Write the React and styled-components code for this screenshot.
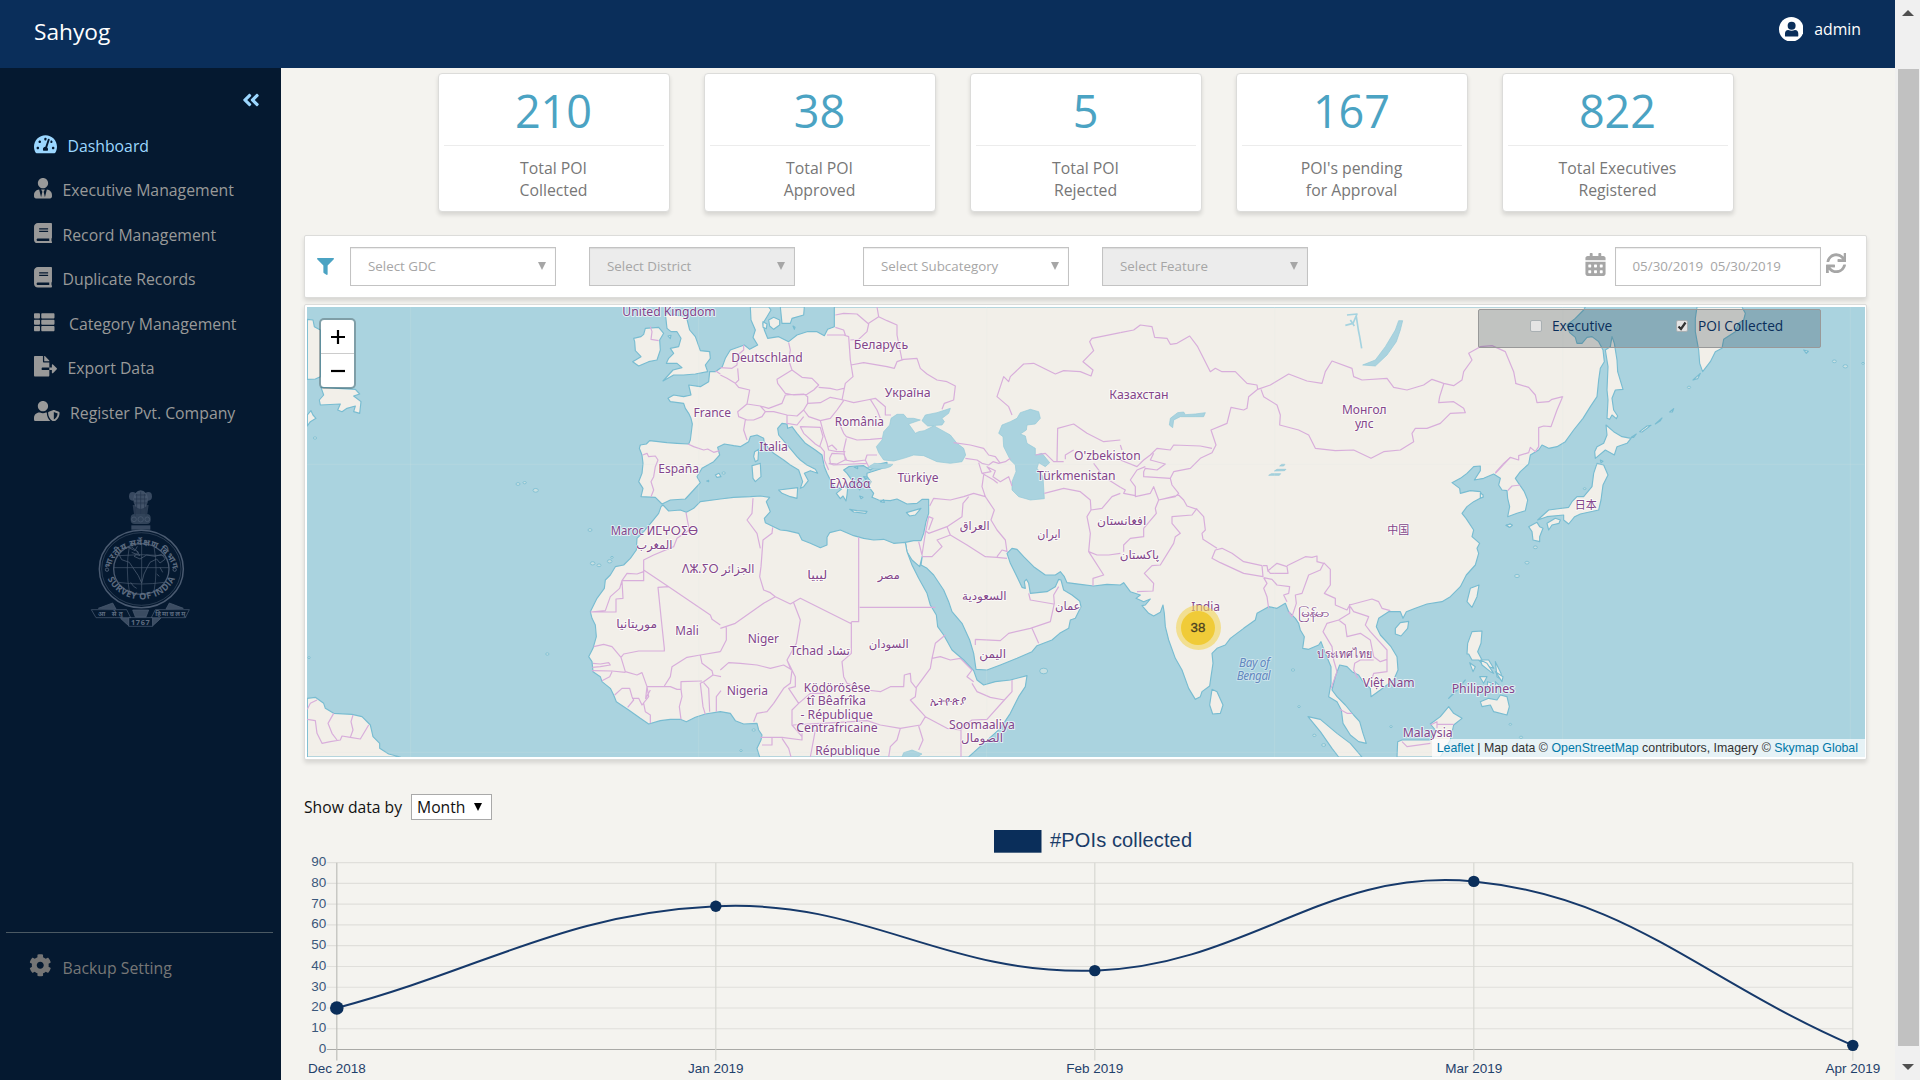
import React from "react";
import styled, { createGlobalStyle } from "styled-components";
import {
  FaTachometerAlt, FaUserTie, FaBook, FaThList, FaFileExport, FaUserShield,
  FaCog, FaAngleDoubleLeft, FaFilter, FaCalendarAlt, FaSync,
} from "react-icons/fa";

const sans = `"Open Sans", "Noto Sans", sans-serif`;
const arial = `"Liberation Sans", Arial, sans-serif`;

const GlobalStyle = createGlobalStyle`
  * { box-sizing: border-box; }
  body { margin: 0; background: #f4f3ef; font-family: ${sans}; overflow: hidden; }
`;

/* ---------- shell ---------- */
const Shell = styled.div`display: flex; width: 1920px; height: 1080px; overflow: hidden;`;
const Page = styled.div`display: flex; flex-direction: column; width: 1895px; flex: none;`;
const Header = styled.header`
  display: flex; justify-content: space-between; height: 68px; flex: none;
  padding: 0 34px 0 34px; background: #0a2e5a; color: #fff;
`;
const Brand = styled.div`font-size: 22.7px; line-height: 64px;`;
const Account = styled.div`
  display: flex; align-items: center; gap: 11px; height: 58px; font-size: 15.8px;
`;
const Body = styled.div`display: flex; height: 1012px;`;

const ScrollTrack = styled.div`
  display: flex; flex-direction: column; align-items: center;
  width: 25px; background: #f0f0f0; padding-top: 10px;
`;
const ScrollThumb = styled.div`width: 21px; height: 977px; margin: 53px 0 18px 1px; background: #c1c1c1;`;
const ScrollArrow = styled.div`
  width: 0; height: 0; border: 6px solid transparent;
  border-top-width: ${p => (p.$up ? 0 : 6)}px; border-bottom-width: ${p => (p.$up ? 6 : 0)}px;
  border-top-color: ${p => (p.$up ? "transparent" : "#505050")};
  border-bottom-color: ${p => (p.$up ? "#505050" : "transparent")};
`;

/* ---------- sidebar ---------- */
const Sidebar = styled.aside`
  display: flex; flex-direction: column; width: 281px; flex: none; background: #051930;
`;
const Collapse = styled.div`
  display: flex; justify-content: flex-end; padding: 22px 20px 0 0; height: 55.5px; color: #9cd7ff;
`;
const NavRow = styled.div`
  display: flex; align-items: center; height: 44.5px; padding-left: 34px; gap: ${p => p.$gap}px;
  font-size: 15.8px; color: ${p => (p.$active ? "#9cd7ff" : "#999")};
  svg { margin-bottom: 4px; flex: none; }
`;
const EmblemBox = styled.div`margin: 54px 0 0 90px; height: 140px;`;
const Divider = styled.div`height: 1px; margin: auto 8px 0 6px; background: #4b5963;`;
const BackupRow = styled.div`
  display: flex; align-items: center; gap: 11px; height: 147px; padding: 0 0 78px 29px;
  font-size: 15.8px; color: #777;
  svg { margin-bottom: 4px; color: #757575; }
`;

/* ---------- main ---------- */
const Main = styled.main`
  display: flex; flex-direction: column; flex: 1; min-width: 0; padding: 5px 28px 0 23px; background: #f4f3ef;
`;
const Cards = styled.div`display: flex; justify-content: center; gap: 34px;`;
const Card = styled.div`
  width: 232px; height: 139px; padding: 0 5px; background: #fff; text-align: center;
  border: 1px solid #dcdcda; border-radius: 4px; box-shadow: 0 3px 4px rgba(0,0,0,.12);
`;
const CardValue = styled.div`
  height: 72px; border-bottom: 1px solid #ececec; color: #4ba3c3;
  font-size: 45px; line-height: 73px;
`;
const CardLabel = styled.div`
  padding-top: 11px; font-size: 15.8px; line-height: 22px; color: #777; white-space: pre-line;
`;
const Panel = styled.div`
  background: #fff; border: 1px solid #dcdcda; border-radius: 2px; box-shadow: 0 3px 4px rgba(0,0,0,.12);
`;
const Filters = styled(Panel)`
  display: flex; align-items: center; height: 63px; margin-top: 23px; padding: 0 20px 0 12px;
`;
const FilterIcon = styled.span`
  display: flex; color: ${p => p.$color}; margin: 0 ${p => p.$right}px ${p => p.$bottom || 0}px ${p => p.$left || 0}px;
`;
const Field = styled.div`
  display: flex; align-items: center; justify-content: space-between; width: 206px; height: 39px;
  margin-right: ${p => p.$after || 0}px; padding: 0 9px 2px 17px;
  background: ${p => (p.$disabled ? "#ececec" : "#fff")}; border: 1px solid #c3c3c3;
  box-shadow: inset 0 1px 1px rgba(0,0,0,.08);
  color: #a6a6a6; font-size: 13.33px; white-space: pre;
`;
const Caret = styled.span`
  width: 0; height: 0; border: solid transparent; border-width: ${p => p.$h}px 4px 0;
  border-top-color: ${p => p.$color};
`;
const Spacer = styled.div`flex: 1;`;

const MapPanel = styled(Panel)`margin-top: 6px; height: 456px; padding: 2px 1px 2px 2px; `;
const MapView = styled.div`position: relative; width: 1558px; height: 450px; overflow: hidden;`;
const ZoomControl = styled.div`
  position: absolute; left: 12px; top: 11px; width: 37px; height: 71px; background: #fff; background-clip: padding-box;
  border: 2px solid rgba(0,0,0,.25); border-radius: 5px;
`;
const ZoomButton = styled.div`
  display: flex; align-items: center; justify-content: center; height: ${p => p.$h}px;
  border-bottom: ${p => (p.$line ? "1px solid #ccc" : "none")};
`;
const LayerBox = styled.div`
  position: absolute; left: 1171px; top: 2px; width: 343px; height: 39px; display: flex; align-items: center;
  padding: 0 0 6px 51px; background: rgba(0,20,35,.2); border: 1px solid #999; border-radius: 2px;
  color: #0a2e5a; font-size: 13.7px;
`;
const Check = styled.span`
  display: flex; width: 12px; height: 12px; margin: 0 10px 0 0; background: #e4e4e4;
  border: 1px solid #a9b0b3; border-radius: 2px;
`;
const LayerName = styled.span`width: ${p => p.$w}px; white-space: nowrap;`;
const Attribution = styled.div`
  position: absolute; right: 0; bottom: 0; height: 18px; padding: 0 7px 0 5px; white-space: nowrap;
  background: rgba(255,255,255,.7); font: 12.36px/18px ${arial}; color: #333;
  span { color: #0078a8; }
`;
const Cluster = styled.div`
  position: absolute; left: 868.5px; top: 298px; width: 45px; height: 45px; padding: 5.5px; border-radius: 50%;
  background: rgba(241,211,87,.6);
`;
const ClusterCore = styled.div`
  height: 34px; border-radius: 50%; background: rgba(240,200,40,.85); color: #4a4020;
  text-align: center; font: 13.3px/33px ${arial}; -webkit-text-stroke: .3px #4a4020;
`;

const Controls = styled.div`
  display: flex; align-items: center; height: 26px; margin-top: 34px; gap: 9px; font-size: 15.7px; color: #111;
`;
const MonthSelect = styled.div`
  display: flex; align-items: center; justify-content: space-between; width: 81px; height: 26px;
  padding: 0 9px 0 5px; background: #fff; border: 1px solid #a9a9a9;
`;
const ChartArea = styled.svg`
  display: block; flex: none; width: 1591px; height: 260px; margin-right: -28px; font-family: ${arial};
`;

/* ---------- icons ---------- */
const UserBadge = () => (
  <svg width="24.6" height="24.6" viewBox="0 0 74 74">
    <circle cx="37" cy="37" r="37" fill="#fff" />
    <ellipse cx="38" cy="26" rx="12" ry="12" fill="#0a2e5a" />
    <path d="M18 57V50Q18 40 28 39Q38 44 48 39Q58 40 58 50V57Q58 59 55 59H21Q18 59 18 57Z" fill="#0a2e5a" />
  </svg>
);

const Emblem = () => (
  <svg width="102" height="140" viewBox="90 90 306 420" fill="none" stroke="#4a5a70" strokeWidth="2.2">
    <g fill="#4a5a70" stroke="none">
      <ellipse cx="242" cy="122" rx="22" ry="28" opacity=".85" />
      <ellipse cx="218" cy="112" rx="11" ry="13" opacity=".75" />
      <ellipse cx="265" cy="112" rx="11" ry="13" opacity=".75" />
      <path d="M218 138H266L262 165H222Z" opacity=".55" />
      <rect x="212" y="165" width="60" height="30" rx="12" opacity=".65" />
      <rect x="214" y="199" width="57" height="13" opacity=".75" />
    </g>
    <path d="M230 105V150M242 98V165M254 105V150M226 145V170M258 145V170M222 120H262M226 108H258M222 132H262" stroke="#26374e" />
    <circle cx="222" cy="181" r="7" /><circle cx="242" cy="181" r="8" /><circle cx="262" cy="181" r="7" />
    <ellipse cx="244" cy="330" rx="126" ry="116" strokeWidth="4.5" />
    <ellipse cx="244" cy="330" rx="119" ry="109" strokeWidth="1.6" />
    <ellipse cx="244" cy="330" rx="83" ry="76" strokeWidth="4" />
    <path d="M245 253V407M160 326H328M175 290Q244 284 313 290M175 370Q244 380 313 370M208 262Q196 330 208 398M282 262Q294 330 282 398" strokeWidth="2" />
    <path d="M175 282L190 268 215 264 235 280 222 292 240 300 260 288 285 292 305 286 316 300 300 312 290 300 270 310 262 325 252 345 245 372 235 350 218 325 208 310 185 302ZM205 265L225 275 232 262M215 280L240 290 230 275M300 325L308 340M212 370Q220 385 230 388M290 345L298 352" strokeWidth="2.4" />
    <circle cx="141" cy="332" r="5" strokeWidth="3" /><circle cx="344" cy="332" r="5" strokeWidth="3" />
    <path id="arcTop" d="M150 332A95 86 0 0 1 338 332" stroke="none" />
    <path id="arcBottom" d="M137 342A110 103 0 0 0 351 342" stroke="none" />
    <g fill="#5d6c80" stroke="none" fontFamily={sans} fontWeight="700">
      <text fontSize="26"><textPath href="#arcTop" startOffset="50%" textAnchor="middle" textLength="255">भारतीय सर्वेक्षण विभाग</textPath></text>
      <text fontSize="27"><textPath href="#arcBottom" startOffset="50%" textAnchor="middle" textLength="250">SURVEY OF INDIA</textPath></text>
      <text x="241" y="497" fontSize="22" textAnchor="middle" textLength="56">1767</text>
      <text x="151" y="472" fontSize="19" textAnchor="middle" textLength="74">आ सेतु</text>
      <text x="331" y="472" fontSize="19" textAnchor="middle" textLength="90">हिमाचलम्</text>
    </g>
    <path d="M94 452H200L212 476H108ZM388 452H286L274 476H376ZM206 476H278V502H206ZM182 478L206 500M302 478L278 500" />
    <path d="M115 448L158 432 168 450ZM370 448L328 432 318 450ZM182 478H206V500ZM302 478H278V500Z" fill="#3b4c62" />
    <path d="M218 453H266L258 474H226Z" fill="#3b4c62" />
  </svg>
);

/* ---------- map data: one unit is a third of a pixel ---------- */
const LAND = [
  // Eurasia with Arabia
  [0, "M1350 21L1352 60 1365 90 1358 112 1372 135 1348 148 1332 135 1290 150 1275 175 1266 200 1245 215 1228 215 1225 245 1200 260 1165 255 1172 285 1150 290 1120 285 1103 295 1110 305 1150 310 1155 325 1165 340 1172 355 1176 372 1170 420 1165 432 1130 430 1100 428 1048 422 1038 432 1020 435 1017 445 1025 465 1028 490 1025 520 1015 545 1028 565 1022 590 1065 592 1085 612 1110 600 1155 597 1180 570 1200 548 1190 530 1205 505 1240 485 1258 465 1252 442 1272 432 1300 437 1320 440 1345 425 1350 410 1370 405 1390 415 1392 430 1420 460 1450 480 1470 495 1495 510 1507 545 1500 565 1510 560 1524 542 1512 520 1530 512 1552 520 1545 508 1520 495 1500 480 1490 470 1465 440 1435 405 1432 385 1445 370 1460 372 1462 385 1475 380 1490 400 1515 430 1545 450 1565 465 1572 500 1580 520 1590 540 1600 560 1625 566 1608 580 1620 596 1628 588 1637 603 1640 585 1642 565 1635 560 1658 545 1640 520 1630 510 1645 500 1665 498 1690 497 1710 510 1735 492 1760 487 1760 497 1740 507 1700 520 1700 530 1712 545 1705 560 1720 580 1715 592 1735 600 1770 602 1790 597 1820 612 1850 610 1865 598 1885 598 1885 640 1877 665 1870 700 1862 722 1840 722 1815 727 1820 755 1835 780 1858 800 1866 768 1862 795 1880 805 1900 825 1930 870 1945 905 1955 935 1985 970 2008 1020 2020 1060 2027 1108 2060 1110 2100 1095 2150 1075 2195 1055 2210 1037 2255 1020 2278 1000 2305 985 2310 960 2325 955 2342 920 2338 903 2315 885 2290 870 2282 840 2275 838 2265 860 2240 875 2190 880 2185 850 2178 838 2172 845 2175 865 2165 862 2150 830 2130 790 2120 760 2135 745 2150 748 2170 770 2200 800 2235 825 2265 825 2280 815 2292 830 2300 848 2340 853 2380 858 2420 853 2460 855 2470 848 2490 875 2520 885 2507 895 2530 905 2550 897 2535 915 2525 917 2545 940 2560 948 2580 937 2588 915 2592 940 2595 980 2605 1020 2625 1075 2645 1110 2665 1165 2685 1198 2700 1190 2705 1175 2728 1158 2732 1130 2738 1090 2735 1060 2750 1045 2775 1035 2790 1015 2830 985 2865 960 2870 940 2905 920 2930 925 2955 910 2965 935 2985 955 2995 970 3000 990 3012 1010 3007 1045 3025 1048 3055 1035 3062 1025 3075 1060 3092 1100 3092 1150 3085 1190 3110 1205 3123 1230 3128 1270 3150 1305 3175 1325 3198 1330 3188 1300 3178 1265 3160 1245 3135 1215 3110 1190 3095 1170 3105 1130 3118 1095 3140 1100 3155 1115 3175 1125 3188 1145 3210 1165 3212 1190 3240 1170 3280 1140 3293 1110 3290 1070 3272 1040 3240 1005 3228 980 3235 955 3265 935 3300 935 3308 955 3318 935 3345 925 3380 912 3425 905 3450 890 3480 860 3498 825 3525 795 3535 760 3530 745 3538 730 3515 710 3520 690 3497 655 3485 640 3500 620 3520 605 3548 590 3540 575 3510 572 3480 580 3478 565 3455 548 3480 535 3500 520 3520 500 3540 498 3540 512 3522 540 3550 535 3580 522 3600 535 3595 555 3605 570 3620 572 3622 595 3628 620 3622 650 3650 640 3675 632 3682 600 3672 575 3655 550 3645 535 3660 515 3685 492 3690 465 3715 450 3725 435 3745 445 3770 440 3795 425 3820 390 3848 355 3870 320 3890 290 3895 240 3900 205 3912 185 3908 150 3895 125 3875 110 3860 112 3845 130 3830 130 3825 112 3808 98 3800 75 3825 55 3850 30 3855 21L1602 21 1602 80 1582 88 1572 107 1550 95 1520 95 1490 105 1465 125 1435 110 1402 115 1392 90 1388 70 1400 50 1412 30 1405 21Z"],
  // Africa
  [0, "M1815 727L1780 730 1750 718 1720 720 1690 715 1660 707 1620 690 1588 698 1580 712 1580 735 1560 743 1530 730 1505 720 1495 700 1460 692 1440 690 1415 678 1395 668 1392 655 1410 635 1398 605 1408 592 1380 588 1350 590 1300 592 1260 597 1200 605 1180 625 1158 637 1140 630 1105 633 1088 615 1082 620 1075 640 1055 665 1030 695 1010 715 1008 750 990 775 970 795 945 800 930 825 915 840 912 865 890 895 870 935 875 955 885 975 888 1010 878 1045 865 1070 875 1085 878 1115 900 1130 905 1145 930 1165 940 1185 948 1205 985 1230 1020 1255 1045 1272 1080 1262 1110 1258 1140 1258 1158 1265 1185 1252 1215 1242 1260 1235 1290 1240 1305 1262 1330 1272 1370 1270 1375 1290 1385 1305 1382 1320 1370 1345 1378 1371H2005L2050 1330 2100 1285 2130 1240 2155 1190 2175 1160 2180 1127 2130 1140 2085 1145 2050 1155 2030 1140 2020 1112 1990 1080 1955 1050 1930 1005 1912 980 1908 945 1890 915 1880 880 1855 835 1835 795 1820 755Z"],
  // Scandinavia and Danish islands
  [1260, "M180 21L185 70 210 70 215 55 250 45 252 21ZM145 60L160 52 178 60 178 75 160 88 148 78ZM128 65L140 72 138 86 128 82ZM218 78L224 82 222 88Z"],
  // British Isles
  [0, "M1035 85L1075 82 1090 100 1078 120 1080 150 1070 180 1045 185 1015 198 997 185 1022 170 1005 152 1003 125 1000 115 1022 110 1030 103ZM1095 40L1158 50 1168 90 1185 110 1200 152 1228 155 1230 175 1215 195 1222 215 1185 222 1150 225 1120 225 1088 243 1118 210 1145 203 1130 190 1098 190 1105 175 1120 160 1110 145 1135 140 1142 115 1130 95 1112 95 1100 85ZM1103 108L1112 106 1110 116ZM1245 525L1256 520 1262 530 1250 532ZM1219 543l6-2 0 4z"],
  // Newfoundland and Nova Scotia
  [0, "M21 58L38 60 42 80 60 90 60 230 45 237 21 238ZM62 262L165 268 178 282 160 288 182 305 178 340 160 335 165 318 140 325 125 335 112 330 120 312 60 315 57 300 70 285ZM21 345L32 332 38 345 47 355 30 365 21 378Z"],
  // Guianas
  [0, "M21 1195L45 1192 70 1210 75 1225 100 1240 155 1243 185 1250 210 1275 218 1310 238 1330 238 1345 265 1362 300 1371 21 1371Z"],
  // Mediterranean islands
  [1260, "M103 455L115 448 113 480 105 485 100 470ZM95 497L120 490 122 530 105 545 98 535ZM175 570L232 563 230 595 210 590 185 580ZM388 628L410 632 440 634 436 640 400 636ZM558 638L602 625 585 645 568 648ZM480 605l10-6 2 8zM410 560l12 4-4 6zM430 530l12 2-6 6zM418 588l10 4-6 4zM402 502l10-2 0 6zM405 545l8 4-4 4z"],
  // Indian Ocean and South-East Asia
  [2460, "M275 1168L290 1175 308 1215 300 1240 277 1242 268 1215ZM563 1250L600 1258 650 1300 690 1330 725 1371 655 1371 635 1345 600 1295ZM832 1325L845 1320 930 1320 945 1290 930 1272 960 1250 985 1220 1000 1240 1025 1255 1000 1275 990 1320 960 1371 830 1371ZM825 985L840 968 865 964 862 985 842 1008 825 1002ZM1076 855L1070 890 1055 922 1040 905 1050 865ZM1055 995L1085 993 1082 1030 1072 1055 1085 1080 1105 1080 1120 1105 1090 1095 1075 1080 1055 1080 1045 1062 1040 1062 1042 1030ZM1080 1205L1105 1195 1130 1200 1140 1185 1160 1190 1167 1220 1160 1245 1120 1235 1110 1215 1085 1220ZM985 1195L1035 1140 1010 1172ZM1125 1085L1142 1120 1145 1140 1130 1130ZM1078 1130L1100 1130 1090 1150ZM1102 1145L1115 1150 1100 1170ZM1125 1145L1140 1160 1128 1165ZM1048 1088L1065 1100 1058 1115ZM1157 676l12-4 6 4-8 6z"],
  // Japan, Sakhalin, Kamchatka
  [3540, "M395 110L402 130 410 180 412 215 428 268 405 270 395 295 400 330 412 348 408 356 395 345 388 358 380 355 383 300 380 270 383 200 375 150 390 140ZM650 21L645 55 645 95 655 150 658 190 667 215 690 185 705 155 725 145 730 118 765 95 775 70 790 60 795 40 785 21ZM377 375L400 395 425 410 452 415 440 430 410 440 402 465 375 450 345 475 343 455 350 440 370 430 380 405ZM350 490L370 495 383 525 368 555 362 600 355 630 300 642 283 650 265 672 250 660 250 645 200 650 172 660 205 630 265 622 275 605 290 590 310 590 335 560 340 520ZM360 480l8 4-6 4zM145 680L170 667 178 680 188 685 178 710 178 725 158 720 155 695ZM200 670L225 655 240 660 236 670 215 675 205 690ZM638 240L660 220 652 236ZM78 676l12-4 6 4-8 6zM525 372L545 354 540 362ZM478 395L500 378 512 376 485 396ZM453 412L468 402 460 412ZM568 336l12-10-4 10zM970 150l14 4-6 6zM0 580l8 4 0 8-8 2zM0 1080L20 1090 40 1120 30 1115 5 1095ZM45 1115L68 1130 65 1145Z"],
];

const WATER = [
  // Black Sea, Azov, Marmara
  [1260, "M475 458L468 440 485 420 490 395 508 375 512 355 530 343 550 343 560 355 580 355 600 360 565 372 585 400 595 395 612 392 640 378 622 378 605 362 615 345 650 338 690 325 685 340 665 355 672 365 665 375 645 376 645 380 690 405 710 430 730 445 736 465 725 485 690 490 650 485 610 467 580 465 550 475 520 483 490 480ZM440 503L462 490 490 492 518 493 510 500 495 505 470 507Z"],
  // Caspian
  [1260, "M900 338L930 328 955 335 960 355 945 372 920 375 918 390 900 402 915 408 920 430 945 445 945 465 965 460 988 488 975 500 955 488 950 505 968 530 972 596 930 600 895 590 875 570 875 545 887 515 885 495 870 480 850 440 848 410 835 400 845 375 870 365 890 355Z"],
  // Baikal, Balkhash, Victoria and minor lakes
  [2460, "M835 62L847 62 840 90 828 125 800 165 765 198 727 195 765 180 795 140 825 90ZM147 375L150 355 172 338 190 336 195 344 225 342 255 338 250 350 225 350 180 350 160 360 157 383ZM445 526l8-5h28l-4 5zM462 513l8-5h27l-4 4zM478 498l6-5h10l-4 5z"],
  [1260, "M545 1371L550 1358 575 1350 605 1362 590 1371Z"],
];

const BORDERS = [
  [0, "M1027 465L1040 460 1045 470 1065 468 1073 480 1065 500 1060 530 1052 545 1060 570 1052 590M1163 432L1180 440 1210 450 1222 447 1240 457 1258 452M1050 80L1055 95 1052 118 1075 122M1245 212L1260 222M1157 637L1162 665 1167 690 1130 715 1120 740 1060 765 1030 780V842H965L968 895 947 897V936H870M1030 810L1105 860 1230 945 1235 958 1260 975M965 842L958 865 930 890 915 932 870 936M965 842L980 820 1010 822 1030 815M1105 860L1073 862 1083 960 1092 1045V1053H1015L970 1062 962 1072 935 1040 910 1033 880 1040M962 1072L975 1115 1010 1125 1025 1118 1040 1160 1036 1195 1050 1170M878 1090L900 1092 925 1088 930 1095 900 1100 876 1102M875 1112L935 1113 975 1117M935 1115L928 1130 905 1142M943 1185L965 1165 988 1165 995 1190 1000 1200 982 1222M995 1195L1015 1195 1025 1215 1045 1190 1040 1160 1092 1160 1110 1160 1130 1168 1142 1168V1145L1205 1143M1030 1210L1035 1235 1050 1245V1270M1142 1168L1145 1190 1137 1220 1142 1258M1092 1158L1110 1130 1115 1100 1160 1072 1200 1065 1205 1090 1235 1112 1238 1125 1210 1145 1200 1150 1208 1220 1215 1243M1200 1065L1260 1055M1210 1148L1225 1165 1228 1235M1238 1125L1262 1130M1262 1172L1248 1190V1235M21 1228L30 1210 50 1200M21 1258L45 1262 50 1300 65 1330 90 1325 120 1320 125 1308 150 1312 180 1317 205 1275M100 1240L83 1270 95 1300 110 1320M158 1245L152 1265 158 1290 150 1312"],
  [1260, "M0 203L35 205 50 195 52 165 70 150V135M0 225L20 235 45 250 55 240 52 205M45 250L55 262 88 270 80 312 120 318 135 335 125 350 100 360 80 360 55 350 52 335 80 312M75 360L70 390 80 420M120 318L145 325 185 310 195 285 250 282 262 290V310L250 330 230 348 200 345 160 335 135 335M170 238L215 210 245 232 275 235 295 255 280 270 260 283 220 285 195 280 172 250ZM205 128L210 150 205 180 215 210M370 105L385 110 390 180 398 230 375 250 365 300 370 300 400 308 440 300 465 295 495 320V345H512M295 262L330 265 350 270 370 265M262 310L300 308 330 292 370 300M250 330L265 350 300 362 330 355 350 330 370 302M320 105H375L370 90 345 82M345 45L370 40 410 42 445 72 440 95 415 118 390 120M470 21L475 50 445 70M475 50L500 62 530 75V105L545 180M392 195L430 188 500 200 522 205 530 185 550 178 590 175 600 205 620 222 650 240 680 245 705 258 700 300 672 310 665 328M450 298L470 330 480 355M350 355L370 400 378 410 410 420 450 418 485 415M378 415L370 450 375 480 400 485 435 480 440 465 470 465M200 345V370L230 375 250 350M240 380L300 382 308 410 298 440 285 432 250 400ZM300 362L310 400 320 430 325 450 350 455 375 455M300 440L312 455V480L325 510M325 440L335 435 350 450M328 475L335 460 370 462 378 478 350 492 330 490ZM435 480L445 500M325 490L340 495 440 490M700 428L750 435 790 445 805 465 825 470 840 490M735 475L770 480 785 490 805 495 818 485 835 490 855 485 870 475M775 488L785 520 820 540 832 550M785 520L812 515 800 500 825 512 818 530 840 545 865 530 875 558M790 525L785 560 795 590 822 630 812 660 830 690 855 720 860 755M628 618L640 595 690 600 730 590 760 580 795 590M745 590L728 610 725 650 680 680 625 700 615 692M680 680L690 705 650 720 665 740 635 770H605M690 705L740 735 795 770 830 772 860 775M830 770L845 750 862 755M595 725L605 765 615 700 625 650 638 655 625 690M765 1018L840 1022 865 1000 930 985 990 965 1002 910 1000 885 1015 860M765 1018V1035M935 985L955 1030M925 880L930 900 1000 912M98 595L95 640 80 660 110 700 120 745M157 682L155 700 128 720 122 800 118 830 130 870 150 878 165 890 130 910 45 970 0 985M165 890L210 912 240 895 390 970 395 965H415V712M418 922H645M393 968V1060L365 1085 370 1130 380 1150 440 1170 480 1175 510 1160 550 1160 552 1125 570 1120 572 1145 588 1165 585 1190 570 1200 615 1250 600 1275 540 1285 480 1275 440 1262 395 1265 300 1270 218 1275M220 908L240 960 228 1030 200 1080 212 1110M0 1110L25 1088 60 1090 110 1095 150 1105 190 1095 215 1110 210 1150 190 1165 160 1210 140 1235 110 1240 100 1265M0 1055L18 1020V982M200 1080L225 1130 225 1160 205 1165 235 1210 215 1230V1275L245 1310M235 1210L270 1180 310 1180 370 1150M588 1162L630 1105 635 1075 660 1070 690 1080 720 1075 755 1110 740 1130 760 1145M635 1075L645 1030 675 1005M755 1150L770 1175 810 1192 852 1200 800 1258 755 1260 720 1290 680 1285 615 1250M852 1200L875 1175V1140M722 1290V1371M595 1278L608 1320 595 1350M540 1285L530 1320 510 1340 505 1371M285 1290L270 1371M245 1300V1320L185 1312H120M155 1312V1335H125M185 1315L205 1345 212 1371M875 345L865 320 830 290 850 230 865 245 870 230 910 192 940 190 1005 222 1030 212 1080 215 1112 228 1118 210 1088 185 1120 152 1108 125 1115 115 1200 98M945 465L975 460 1000 485H1030M1010 483L1012 385 1060 372 1100 400 1150 425 1200 420M1035 478L1035 465 1060 450M972 580L1030 565 1080 575 1110 600 1112 630 1145 625 1175 590 1200 580M1112 630L1100 650 1110 700 1105 755 1150 825 1118 835V858M1105 755L1130 765 1165 765 1200 760M1120 490L1150 530 1200 562"],
  [2460, "M0 98L40 90 60 75 95 80 103 112 140 115 150 133 170 130 208 108 232 140 270 215 285 205 305 215 345 215 380 250 410 255 412 268 450 255 505 222 560 243 605 250 615 215 635 183 695 205 700 230 725 240 800 235 820 262 860 270 910 255 935 238 970 250 1000 257 1025 240 1030 215 1055 180 1045 160 1080 140 1115 137 1155 155 1180 215 1187 252M422 268L430 290 470 315 480 345 478 375 535 390 565 405 585 445 645 452 700 450 752 475 790 455 840 450 880 425 875 400 885 385 920 385 960 370 990 340 1035 338 1030 325 1000 305 955 308 958 290 970 252M412 268L385 290 380 325 370 330 332 322 320 370 272 390 287 435 275 458 240 475 210 505 160 515 150 535 70 530V515L75 505M275 445L240 438 160 435 150 450 110 445 90 465 70 480 50 500 0 480M100 460L90 480 135 492 110 510 75 505M150 535L155 555 175 580 165 590 115 600 100 560 90 580 45 590 45 560 30 540 50 510 75 500M0 562L15 570 10 580 45 587M0 435L5 450M175 585L115 600 105 625 108 640 70 685V710L30 715 10 735V755M230 625L215 645 155 650V670L180 700 165 710 160 730 120 795 95 797 72 820 100 850 98 873 50 875M175 585L190 600 200 618 230 628 250 650 255 690 245 700 248 718 290 745M275 775L285 750 305 745 335 760 370 785 425 797 428 830 370 820 300 788ZM428 797H440L443 815M443 812L470 790 500 800 503 820 450 820ZM500 797L555 770 575 772 590 768V785L610 790 600 810 565 825 545 880 525 885 528 910 515 950 505 935M430 833L455 838 470 855 508 860 505 880 490 885 500 905M430 833L440 850 430 865 440 890 445 925M610 788L630 808V855L612 880 645 895V915L680 930 688 915 755 897 775 905 785 925 810 932M688 912V940L655 960 620 970 608 995 635 1040 640 1080 650 1115 632 1165M690 920L700 935 745 950 735 975 750 995 800 1050V1115L760 1120 755 1135M655 960L675 975 680 1010 720 1000 750 1020 760 1070 780 1085 800 1078M760 1080L720 1080 703 1090 700 1110 712 1135M658 1228L680 1240 695 1240M845 1325L860 1340 930 1330M930 1275L950 1265V1285M950 1273H1000M1125 518L1150 490 1170 472"],
  [3540, "M105 250L145 262 165 285 170 308 205 305 215 298 247 290 230 330 212 380 190 378 175 383V440L165 455 150 442 145 458 115 467 115 480 90 472 45 520M82 572L95 558 120 555"],
];

const ISLETS = [
  [653, 552, 6], [673, 548, 5], [706, 571, 8], [869, 690, 6], [877, 790, 7], [896, 796, 6], [928, 784, 7], [935, 772, 4],
  [741, 1062, 5], [44, 414, 5], [26, 1073, 4], [2230, 1113, 12], [1270, 519, 5], [2978, 1110, 5], [2996, 1220, 4], [3042, 1306, 5], [3070, 1335, 6],
  [3272, 1280, 4], [3650, 828, 7], [3680, 788, 6], [3705, 742, 6], [4602, 184, 6], [4635, 199, 7], [4688, 190, 4], [4166, 262, 5],
  [3630, 1273, 4], [3662, 1312, 5], [1360, 1290, 5], [1322, 1352, 4], [3853, 566, 4],
];

const SEAMS = "M331 21V1371M1195 21V1371M2059 21V1371M2923 21V1371M3787 21V1371M4650 21V1371M21 493H4692M21 1357H4692";

// [text, centre x, baseline y, drawn width]
const LABELS = [
  ["United Kingdom", 1106, 48, 280], ["Deutschland", 1400, 187, 215], ["France", 1236, 350, 113], ["España", 1135, 519, 122],
  ["Беларусь", 1742, 148, 163], ["Україна", 1822, 290, 138], ["România", 1677, 378, 148], ["Italia", 1420, 452, 86],
  ["Ελλάδα", 1649, 564, 123], ["Türkiye", 1853, 547, 123], ["Казахстан", 2516, 297, 178], ["O'zbekiston", 2421, 480, 200],
  ["Türkmenistan", 2328, 539, 236], ["Монгол", 3192, 343, 134], ["улс", 3192, 384, 56], ["中国", 3294, 703, 66], ["日本", 3856, 626, 66],
  ["Maroc ⵍⵎⵖⵔⵉⴱ", 1062, 706, 262], ["المغرب", 1062, 746, 108], ["ⴷⵣ.ⵢⵔ الجزائر", 1253, 820, 218], ["ليبيا", 1551, 837, 60], ["مصر", 1765, 837, 66],
  ["العراق", 2023, 690, 90], ["ایران", 2246, 714, 70], ["افغانستان", 2464, 676, 148], ["پاکستان", 2517, 777, 118],
  ["السعودية", 2052, 900, 134], ["عمان", 2302, 930, 76], ["اليمن", 2077, 1074, 80], ["السودان", 1765, 1043, 120],
  ["موريتانيا", 1009, 983, 122], ["Mali", 1160, 1006, 70], ["Niger", 1389, 1028, 94], ["Tchad تشاد", 1559, 1066, 180],
  ["Nigeria", 1341, 1185, 124], ["Ködörösêse", 1610, 1175, 200], ["tî Bêafrîka", 1608, 1215, 177], ["- République", 1609, 1256, 217],
  ["Centrafricaine", 1610, 1296, 244], ["République", 1642, 1364, 194], ["ኢትዮጵያ", 1943, 1214, 106], ["Soomaaliya", 2045, 1288, 198],
  ["الصومال", 2045, 1326, 126], ["India", 2716, 932, 86], ["မြန်မာ", 3039, 952, 92], ["ประเทศไทย", 3133, 1074, 164],
  ["Việt Nam", 3265, 1162, 156], ["Philippines", 3549, 1178, 190], ["Malaysia", 3382, 1312, 150],
];

const MapSvg = styled.svg`display: block; background: #aad3df;`;
const Label = styled.text`
  font-family: "Noto Sans", "DejaVu Sans", "Noto Sans CJK SC", sans-serif; font-size: 35.5px;
  text-anchor: middle; fill: ${p => (p.$sea ? "#6388c0" : "#83458b")}; font-style: ${p => (p.$sea ? "italic" : "normal")};
  stroke: rgba(255,255,255,${p => (p.$sea ? 0.35 : 0.65)}); stroke-width: 6px; stroke-linejoin: round; paint-order: stroke;
`;

const shapes = (list, props) =>
  list.map(([dx, d], i) => <path key={i} transform={`translate(${dx} 0)`} d={d} {...props} />);

const WorldMap = () => (
  <MapSvg width="1558" height="450" viewBox="20 21 4674 1350" strokeLinejoin="round">
    {shapes(LAND, { fill: "#f2efe9", stroke: "#78bcd1", strokeWidth: 3.4 })}
    {shapes(WATER, { fill: "#aad3df", stroke: "#93c8d8", strokeWidth: 2 })}
    <path d="M3140 45L3170 42 3158 70 3135 76M3168 50L3174 90 3178 110 3184 145M3150 60L3162 78" stroke="#a5d3e0" strokeWidth="5" fill="none" />
    {shapes(BORDERS, { fill: "none", stroke: "#d8aedb", strokeWidth: 3.6 })}
    {ISLETS.map(([x, y, r], i) => (
      <ellipse key={i} cx={x} cy={y} rx={r} ry={r * 0.7} fill="#c8e0e2" stroke="#78bcd1" strokeWidth="2.4" />
    ))}
    <path d={SEAMS} stroke="#dfe9e6" strokeOpacity=".22" strokeWidth="2.5" />
    {LABELS.map(([t, x, y, w]) => (
      <Label key={t} x={x} y={y} textLength={w} lengthAdjust="spacingAndGlyphs">{t}</Label>
    ))}
    <Label $sea x={2862} y={1100} textLength={92}>Bay of</Label>
    <Label $sea x={2860} y={1140} textLength={102}>Bengal</Label>
  </MapSvg>
);

/* ---------- chart ---------- */
const POINTS = [["Dec 2018", 20], ["Jan 2019", 69], ["Feb 2019", 38], ["Mar 2019", 81], ["Apr 2019", 2]];
const LEFT = 336.8 - 304, STEP = 379, TOP = 862.7 - 820, BASE = 1049.5 - 820;
const px = i => LEFT + i * STEP;
const py = v => BASE - (v * (BASE - TOP)) / 90;

// cardinal spline whose handles are weighted by the neighbouring segment lengths
function splinePath(pts, tension = 0.4) {
  const handles = pts.map((c, i) => {
    const a = pts[i - 1] || c, b = pts[i + 1] || c;
    const d0 = Math.hypot(c[0] - a[0], c[1] - a[1]), d1 = Math.hypot(b[0] - c[0], b[1] - c[1]);
    const f0 = (tension * d0) / (d0 + d1), f1 = (tension * d1) / (d0 + d1);
    return {
      before: [c[0] - f0 * (b[0] - a[0]), c[1] - f0 * (b[1] - a[1])],
      after: [c[0] + f1 * (b[0] - a[0]), c[1] + f1 * (b[1] - a[1])],
    };
  });
  return pts.reduce((d, p, i) => (i ? `${d}C${handles[i - 1].after} ${handles[i].before} ${p}` : `M${p}`), "");
}

const Chart = () => {
  const pts = POINTS.map(([, v], i) => [px(i), py(v)]);
  return (
    <ChartArea viewBox="0 0 1591 260">
      <rect x="690" y="10" width="47.5" height="22.7" fill="#0a2e5a" />
      <text x="746" y="27" fontSize="20" textLength="142" fill="#1a3c68">#POIs collected</text>
      {Array.from({ length: 10 }, (_, i) => (
        <g key={i}>
          <line x1={LEFT - 10} x2={px(4)} y1={py(i * 10)} y2={py(i * 10)} stroke={i ? "#e0dfdb" : "#a9a9a6"} strokeWidth="1.2" />
          <text x={LEFT - 10.5} y={py(i * 10) + 3.5} fontSize="13.5" fill="#3a577b" textAnchor="end">{i * 10}</text>
        </g>
      ))}
      {POINTS.map(([name], i) => (
        <g key={name}>
          <line x1={px(i)} x2={px(i)} y1={TOP} y2={BASE + 11} stroke={i ? "#d8d7d3" : "#bdbdba"} strokeWidth="1.2" />
          <text x={px(i)} y={BASE + 23.3} fontSize="13.5" fill="#1f416b" textAnchor="middle">{name}</text>
        </g>
      ))}
      <path d={splinePath(pts)} fill="none" stroke="#16396a" strokeWidth="2" />
      {pts.map(([x, y], i) => <circle key={i} cx={x} cy={y} r={i ? 5.7 : 6.8} fill="#0a2e5a" />)}
    </ChartArea>
  );
};

/* ---------- page ---------- */
const NAV = [
  ["Dashboard", FaTachometerAlt, 23, 10.5], ["Executive Management", FaUserTie, 18, 10.5], ["Record Management", FaBook, 18, 10.5],
  ["Duplicate Records", FaBook, 18, 10.5], ["Category Management", FaThList, 20.5, 14.5], ["Export Data", FaFileExport, 23, 10.5],
  ["Register Pvt. Company", FaUserShield, 25.6, 10.5],
];
const STATS = [
  [210, "Total POI\nCollected"], [38, "Total POI\nApproved"], [5, "Total POI\nRejected"],
  [167, "POI's pending\nfor Approval"], [822, "Total Executives\nRegistered"],
];

export default function App() {
  return (
    <Shell>
      <GlobalStyle />
      <Page>
        <Header>
          <Brand>Sahyog</Brand>
          <Account><UserBadge />admin</Account>
        </Header>
        <Body>
          <Sidebar>
            <Collapse><FaAngleDoubleLeft size={20} /></Collapse>
            {NAV.map(([name, Icon, w, gap], i) => (
              <NavRow key={name} $active={i === 0} $gap={gap}>
                <Icon style={{ width: w, height: 20.5 }} />{name}
              </NavRow>
            ))}
            <EmblemBox><Emblem /></EmblemBox>
            <Divider />
            <BackupRow><FaCog size={22.5} />Backup Setting</BackupRow>
          </Sidebar>
          <Main>
            <Cards>
              {STATS.map(([v, label]) => (
                <Card key={v}><CardValue>{v}</CardValue><CardLabel>{label}</CardLabel></Card>
              ))}
            </Cards>
            <Filters>
              <FilterIcon $color="#4ba3c3" $right={16}><FaFilter size={17} /></FilterIcon>
              <Field $after={33}>Select GDC<Caret $h={8} $color="#a6a6a6" /></Field>
              <Field $after={68} $disabled>Select District<Caret $h={8} $color="#a6a6a6" /></Field>
              <Field $after={33}>Select Subcategory<Caret $h={8} $color="#a6a6a6" /></Field>
              <Field $disabled>Select Feature<Caret $h={8} $color="#a6a6a6" /></Field>
              <Spacer />
              <FilterIcon $color="#a6a6a6" $right={8} $bottom={5}><FaCalendarAlt size={23} /></FilterIcon>
              <Field>05/30/2019  05/30/2019</Field>
              <FilterIcon $color="#a6a6a6" $left={5} $right={0} $bottom={7}><FaSync size={20.5} /></FilterIcon>
            </Filters>
            <MapPanel>
              <MapView>
                <WorldMap />
                <Cluster><ClusterCore>38</ClusterCore></Cluster>
                <ZoomControl>
                  <ZoomButton $h={34} $line>
                    <svg width="14" height="14" viewBox="0 0 14 14"><path d="M0 7H14M7 0V14" stroke="#000" strokeWidth="2.2" /></svg>
                  </ZoomButton>
                  <ZoomButton $h={33}>
                    <svg width="14" height="14" viewBox="0 0 14 14"><path d="M0 7H14" stroke="#000" strokeWidth="2.2" /></svg>
                  </ZoomButton>
                </ZoomControl>
                <LayerBox>
                  <Check /><LayerName $w={124}>Executive</LayerName>
                  <Check>
                    <svg width="10" height="10" viewBox="0 0 10 10"><path d="M1.5 5.5L4 8L8.5 1.5" fill="none" stroke="#333" strokeWidth="2.2" /></svg>
                  </Check>
                  <LayerName $w={90}>POI Collected</LayerName>
                </LayerBox>
                <Attribution>
                  <span>Leaflet</span> | Map data © <span>OpenStreetMap</span> contributors, Imagery © <span>Skymap Global</span>
                </Attribution>
              </MapView>
            </MapPanel>
            <Controls>
              Show data by
              <MonthSelect>Month<Caret $h={8} $color="#000" /></MonthSelect>
            </Controls>
            <Chart />
          </Main>
        </Body>
      </Page>
      <ScrollTrack><ScrollArrow $up /><ScrollThumb /><ScrollArrow /></ScrollTrack>
    </Shell>
  );
}
